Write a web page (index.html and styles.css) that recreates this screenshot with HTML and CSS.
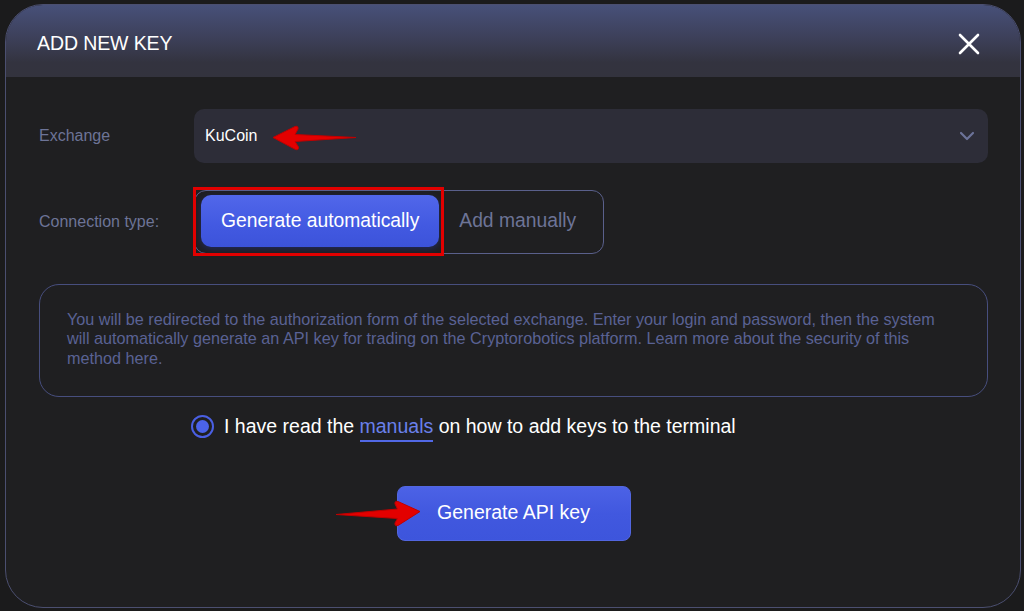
FILE: index.html
```html
<!DOCTYPE html>
<html lang="en">
<head>
<meta charset="utf-8">
<title>Add new key</title>
<link rel="stylesheet" href="styles.css">
</head>
<body>
<div class="modal">
  <div class="modal-header">
    <h1 class="modal-title">ADD NEW KEY</h1>
    <button class="close-btn" aria-label="Close">
      <svg width="22" height="22" viewBox="0 0 22 22"><path d="M2 2 L20 20 M20 2 L2 20" stroke="#ffffff" stroke-width="2.6" stroke-linecap="round"/></svg>
    </button>
  </div>
  <div class="modal-body">
    <div class="field-row">
      <div class="field-label">Exchange</div>
      <div class="select">
        <span class="select-value">KuCoin</span>
        <svg class="arrow arrow-left" width="92" height="32" viewBox="0 0 92 32"><path d="M3 15.5 L25 4.5 Q28.5 3.5 28 7 L25 12.5 L86 15.5 L25 19.5 L28.5 25 Q29 28.5 25.5 27.5 Z" fill="#e30000" stroke="#c00000" stroke-width="1" stroke-linejoin="round"/></svg>
        <svg class="chevron" width="16" height="10" viewBox="0 0 16 10"><path d="M2 2 L8 8 L14 2" fill="none" stroke="#6c7399" stroke-width="2.2" stroke-linecap="round" stroke-linejoin="round"/></svg>
      </div>
    </div>
    <div class="field-row conn-row">
      <div class="field-label">Connection type:</div>
      <div class="toggle-wrap">
        <div class="toggle">
          <button class="toggle-btn active">Generate automatically</button>
          <button class="toggle-btn">Add manually</button>
        </div>
        <div class="highlight-box"></div>
      </div>
    </div>
    <div class="info-box">
      You will be redirected to the authorization form of the selected exchange. Enter your login and password, then the system will automatically generate an API key for trading on the Cryptorobotics platform. Learn more about the security of this method here.
    </div>
    <div class="agree-row">
      <span class="radio"><span class="radio-dot"></span></span>
      <span class="agree-text">I have read the <a class="link" href="#">manuals</a> on how to add keys to the terminal</span>
    </div>
    <div class="actions">
      <div class="submit-wrap">
        <svg class="arrow arrow-right" width="92" height="32" viewBox="0 0 92 32"><path d="M87 13.5 L65 3.5 Q61.5 2.5 62 6 L64.5 11 L3 16.5 L64.5 20.5 L62 25 Q61.5 28.5 65 27.5 Z" fill="#e30000" stroke="#c00000" stroke-width="1" stroke-linejoin="round"/></svg>
        <button class="submit-btn">Generate API key</button>
      </div>
    </div>
  </div>
</div>
</body>
</html>
```
FILE: styles.css
```css
* { box-sizing: border-box; }

html, body {
  margin: 0;
  padding: 0;
  background: #1b1b1c;
  font-family: "Liberation Sans", Arial, Helvetica, sans-serif;
}

body {
  width: 1024px;
  height: 611px;
  overflow: hidden;
}

.modal {
  margin: 4px 0 0 5px;
  width: 1016px;
  height: 604px;
  border: 1px solid #4b4f70;
  border-radius: 38px;
  background: #1f1f21;
  overflow: hidden;
  display: flex;
  flex-direction: column;
}

.modal-header {
  height: 72px;
  flex: none;
  display: flex;
  align-items: center;
  justify-content: space-between;
  padding: 5px 40px 0 31px;
  background: linear-gradient(180deg, #475079 0%, #3d405a 45%, #33333f 80%, #33333e 100%);
}

.modal-title {
  margin: 0;
  color: #ffffff;
  font-size: 19.5px;
  font-weight: 400;
  letter-spacing: -0.1px;
}

.close-btn {
  background: none;
  border: 0;
  padding: 0;
  width: 22px;
  height: 22px;
  display: flex;
  cursor: pointer;
}

.modal-body {
  flex: 1;
  padding: 32px 32px 0 33px;
  display: flex;
  flex-direction: column;
}

.field-row {
  display: grid;
  grid-template-columns: 155px 1fr;
  align-items: center;
}

.field-label {
  color: #6d7497;
  font-size: 16px;
}

.select {
  position: relative;
  height: 54px;
  border-radius: 10px;
  background: #2d2d38;
  display: flex;
  align-items: center;
  justify-content: space-between;
  padding: 0 13px 0 11px;
}

.select-value {
  color: #ffffff;
  font-size: 16px;
}

.chevron { display: block; }

.arrow {
  position: absolute;
  pointer-events: none;
}

.arrow-left {
  left: 76px;
  top: 13px;
}

.conn-row {
  margin-top: 27px;
}

.toggle-wrap {
  position: relative;
  justify-self: start;
}

.toggle {
  display: flex;
  border: 1px solid #5a608c;
  border-radius: 12px;
  padding: 4px 6px 6px 6px;
  height: 64px;
}

.toggle-btn {
  font-family: inherit;
  font-size: 19.3px;
  border: 0;
  background: none;
  color: #6d7497;
  padding: 0 21px 0 20px;
  border-radius: 10px;
  height: 52px;
}

.toggle-btn.active {
  color: #ffffff;
  padding: 0 20px;
  background: linear-gradient(180deg, #5167ea 0%, #4259e1 60%, #3c53da 100%);
  box-shadow: 0 2px 6px rgba(40, 60, 200, 0.35);
}

.highlight-box {
  position: absolute;
  left: -1px;
  top: -3px;
  width: 251px;
  height: 69px;
  border: 3px solid #e10000;
}

.info-box {
  margin-top: 30px;
  border: 1px solid #474e7e;
  border-radius: 20px;
  padding: 25px 30px 27px 27px;
  min-height: 113px;
  color: #5a6294;
  font-size: 16.2px;
  line-height: 19.3px;
}

.agree-row {
  margin-top: 17px;
  padding-left: 152px;
  display: flex;
  align-items: center;
  gap: 10px;
  height: 24px;
}

.radio {
  width: 23px;
  height: 23px;
  border: 2px solid #4a5fe3;
  border-radius: 50%;
  display: flex;
  align-items: center;
  justify-content: center;
  flex: none;
}

.radio-dot {
  width: 13px;
  height: 13px;
  border-radius: 50%;
  background: #4b63ea;
}

.agree-text {
  color: #ffffff;
  font-size: 19.5px;
}

.link {
  color: #6a80ea;
  text-decoration: none;
  border-bottom: 2px solid #5168e6;
  padding-bottom: 3px;
}

.actions {
  margin-top: 48px;
  display: flex;
  justify-content: center;
}

.submit-wrap {
  position: relative;
}

.arrow-right {
  left: -64px;
  top: 12px;
  z-index: 2;
}

.submit-btn {
  font-family: inherit;
  font-size: 19.5px;
  color: #ffffff;
  width: 234px;
  height: 55px;
  border: 1px solid #5266e0;
  border-radius: 8px;
  background: linear-gradient(180deg, #4c62e6 0%, #4158df 50%, #3d55dc 100%);
  padding: 0 0 3px 0;
}
```
